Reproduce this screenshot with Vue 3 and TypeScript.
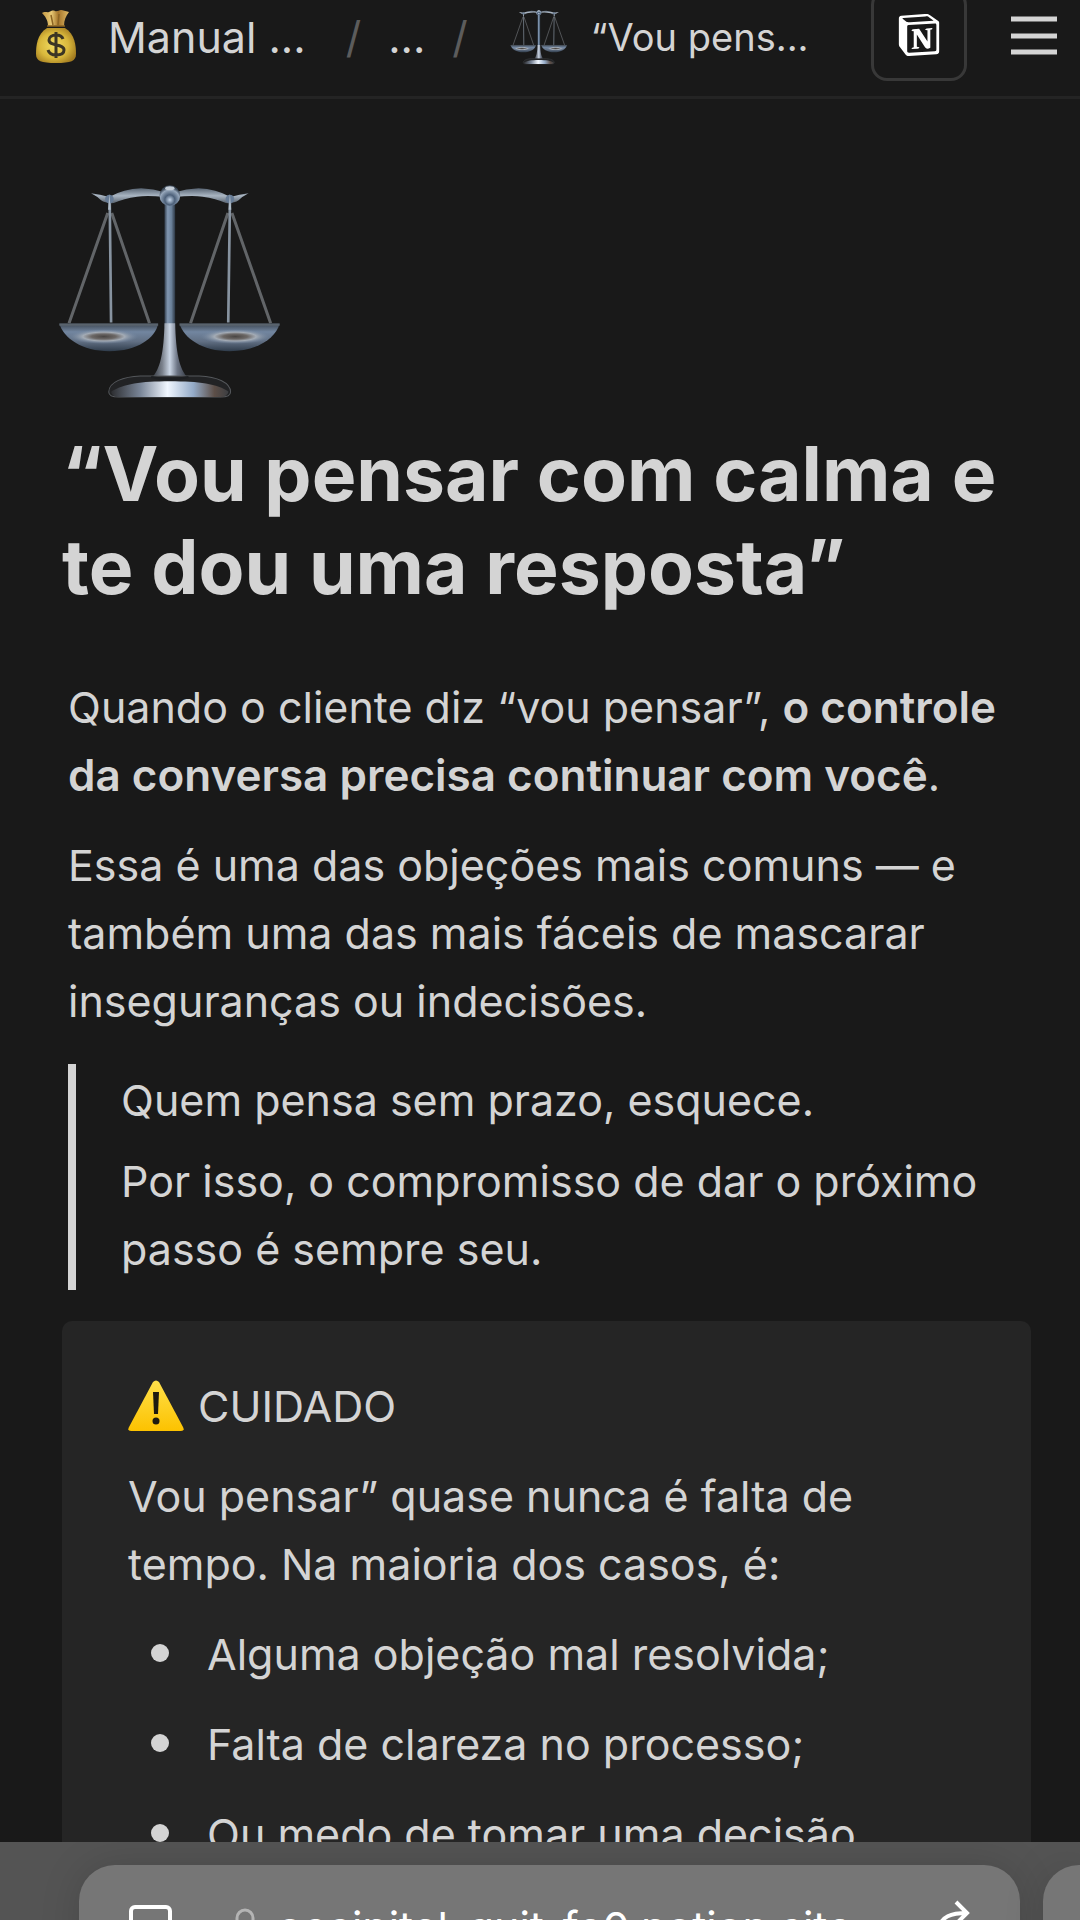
<script setup lang="ts">
import { ref } from 'vue'

const address = ref('occipital-quit-fe0.notion.site')

const reasons: string[] = [
  'Alguma objeção mal resolvida;',
  'Falta de clareza no processo;',
  'Ou medo de tomar uma decisão',
]
</script>

<template>
  <div class="screen">
    <header class="topbar">
      <nav class="crumbs" aria-label="Navegação">
        <a class="crumb root" href="#">
          <svg class="bag" viewBox="0 0 42 54" aria-hidden="true">
            <defs>
              <radialGradient id="bagBody" cx="0.45" cy="0.5" r="0.6">
                <stop offset="0" stop-color="#f2dc62" />
                <stop offset="0.6" stop-color="#d9b83c" />
                <stop offset="1" stop-color="#a37c20" />
              </radialGradient>
              <linearGradient id="bagNeck" x1="0" x2="1" y1="0" y2="0">
                <stop offset="0" stop-color="#c49a45" />
                <stop offset="0.35" stop-color="#e8c874" />
                <stop offset="0.6" stop-color="#a4742a" />
                <stop offset="1" stop-color="#dfba66" />
              </linearGradient>
            </defs>
            <path d="M12 18C2 24 1 36 1 44c0 7 5 9 20 9s20-2 20-9c0-8-1-20-11-26z" fill="url(#bagBody)" />
            <path d="M7 3c3-2 5 0 7-1s4-2 6-1 4-1 6-1 4 1 8 2c-3 4-5 8-5 14H13C13 10 10 6 7 3z" fill="url(#bagNeck)" />
            <path d="M12 16h18M16 5l2 10M24 4l-1 11" stroke="#8b6423" stroke-width="1.5" fill="none" />
            <path d="M28 29c-1-3-4-4-7-4-4 0-7 2-7 5 0 7 15 3 15 10 0 4-4 5-8 5s-7-2-8-5M21 22v26" stroke="#3b3524" stroke-width="3" fill="none" />
          </svg>
          <span>Manual ...</span>
        </a>
        <span class="slash" aria-hidden="true">/</span>
        <a class="crumb" href="#">...</a>
        <span class="slash" aria-hidden="true">/</span>
        <a class="crumb current" href="#">
          <svg class="mini-scale" viewBox="50 70 680 650" aria-hidden="true">
            <use href="#scale" x="50" y="70" width="680" height="650" />
          </svg>
          <span>“Vou pens...</span>
        </a>
      </nav>
      <div class="actions">
        <button class="logo-button" type="button" aria-label="Notion">
          <svg viewBox="0 0 24 24" aria-hidden="true">
            <path fill="#fff" d="M4.459 4.208c.746.606 1.026.56 2.428.466l13.215-.793c.28 0 .047-.28-.046-.326L17.86 1.968c-.42-.326-.981-.7-2.055-.607L3.01 2.295c-.466.046-.56.28-.374.466zm.793 3.08v13.904c0 .747.373 1.027 1.214.98l14.523-.84c.841-.046.935-.56.935-1.167V6.354c0-.606-.233-.933-.748-.887l-15.177.887c-.56.047-.747.327-.747.933zm14.337.745c.093.42 0 .84-.42.888l-.7.14v10.264c-.608.327-1.168.514-1.635.514-.748 0-.935-.234-1.495-.933l-4.577-7.186v6.952L12.21 19s0 .84-1.168.84l-3.222.186c-.093-.186 0-.653.327-.746l.84-.233V9.854L7.822 9.76c-.094-.42.14-1.026.793-1.073l3.456-.233 4.764 7.279v-6.44l-1.215-.139c-.093-.514.28-.887.747-.933zM1.936 1.035l13.31-.98c1.634-.14 2.055-.047 3.082.7l4.249 2.986c.7.513.934.653.934 1.213v16.378c0 1.026-.373 1.634-1.68 1.726l-15.458.934c-.98.047-1.448-.093-1.962-.747l-3.129-4.06c-.56-.747-.793-1.306-.793-1.96V2.667c0-.839.374-1.54 1.447-1.632z" />
          </svg>
        </button>
        <button class="menu-button" type="button" aria-label="Menu">
          <svg viewBox="0 0 46 40" aria-hidden="true">
            <path d="M0 3h46M0 20h46M0 36h46" stroke="#d4d4d4" stroke-width="5" />
          </svg>
        </button>
      </div>
    </header>

    <main class="page">
      <svg class="page-icon" viewBox="50 70 680 650" role="img" aria-label="Balança">
        <defs>
          <linearGradient id="post" x1="0" x2="1" y1="0" y2="0">
            <stop offset="0" stop-color="#34404f" />
            <stop offset="0.3" stop-color="#8196b0" />
            <stop offset="0.65" stop-color="#6a8099" />
            <stop offset="1" stop-color="#2c3744" />
          </linearGradient>
          <linearGradient id="foot" x1="0" x2="1" y1="0" y2="0">
            <stop offset="0" stop-color="#2b3038" />
            <stop offset="0.3" stop-color="#7b828d" />
            <stop offset="0.5" stop-color="#cbd6e5" />
            <stop offset="0.7" stop-color="#6c7484" />
            <stop offset="1" stop-color="#2b3038" />
          </linearGradient>
          <linearGradient id="base" x1="0" x2="1" y1="0" y2="0">
            <stop offset="0" stop-color="#2c2d30" />
            <stop offset="0.25" stop-color="#7a8698" />
            <stop offset="0.48" stop-color="#f1f7ff" />
            <stop offset="0.7" stop-color="#94abc8" />
            <stop offset="0.88" stop-color="#5c4e47" />
            <stop offset="1" stop-color="#3c3e42" />
          </linearGradient>
          <linearGradient id="pan" x1="0" x2="0" y1="0" y2="1">
            <stop offset="0" stop-color="#3c4550" />
            <stop offset="0.3" stop-color="#7286a0" />
            <stop offset="0.65" stop-color="#616f83" />
            <stop offset="1" stop-color="#2f3c4b" />
          </linearGradient>
          <radialGradient id="shine">
            <stop offset="0" stop-color="#4a4644" />
            <stop offset="0.35" stop-color="#6c6866" />
            <stop offset="0.6" stop-color="#a3abb5" />
            <stop offset="1" stop-color="#7286a0" stop-opacity="0" />
          </radialGradient>
          <radialGradient id="ball" cx="0.5" cy="0.7" r="0.6">
            <stop offset="0" stop-color="#c7d8ec" />
            <stop offset="0.4" stop-color="#4c6079" />
            <stop offset="0.8" stop-color="#97a8bc" />
            <stop offset="1" stop-color="#3b4857" />
          </radialGradient>
          <linearGradient id="arm" x1="0" x2="0" y1="0" y2="1">
            <stop offset="0" stop-color="#596573" />
            <stop offset="0.5" stop-color="#a9b5c2" />
            <stop offset="1" stop-color="#59636f" />
          </linearGradient>
          <symbol id="scale" viewBox="50 70 680 650" overflow="visible">
            <path d="M202 160L86 490M214 160L327 490M562 160L450 490M574 160L690 490" stroke="#626568" stroke-width="9" fill="none" />
            <path d="M208 130L212 488M568 130L563 488" stroke="#8793a0" stroke-width="8" fill="none" />
            <path d="M152 101Q180 104 206 112Q250 88 302 86Q340 88 372 98V112Q320 106 290 111Q250 116 220 130Q196 132 182 122Q170 110 152 101zM624 101Q596 104 570 112Q526 88 474 86Q436 88 404 98V112Q456 106 486 111Q526 116 556 130Q580 132 594 122Q606 110 624 101z" fill="url(#arm)" />
            <path d="M372 120H404V500H372z" fill="url(#post)" />
            <path d="M372 490H404C406 575 416 630 444 655H332C360 630 370 575 372 490z" fill="url(#foot)" />
            <circle cx="388" cy="108" r="31" fill="url(#ball)" />
            <ellipse cx="388" cy="86" rx="14" ry="6" fill="#c4cdd7" />
            <circle cx="207" cy="118" r="13" fill="#667b95" />
            <circle cx="568" cy="118" r="13" fill="#667b95" />
            <path d="M203 150L207 102L211 150zM564 150L568 102L572 150z" fill="#aebbc8" />
            <path d="M57 491H353C345 535 290 574 207 574S70 535 57 491z" fill="url(#pan)" />
            <path d="M417 491H717C705 535 650 574 567 574S430 535 417 491z" fill="url(#pan)" />
            <ellipse cx="190" cy="530" rx="104" ry="22" fill="url(#shine)" />
            <ellipse cx="584" cy="530" rx="104" ry="22" fill="url(#shine)" />
            <path d="M57 494H353M417 494H717" stroke="#59636d" stroke-width="7" />
            <path d="M205 696C205 665 250 650 300 648H476C530 650 570 668 570 696Q570 711 540 711H235Q205 711 205 696z" fill="#222325" stroke="#55585c" stroke-width="3" />
            <path d="M212 695C250 672 300 664 388 664S530 672 564 695Q560 710 540 711H235Q214 710 212 695z" fill="url(#base)" />
            <path d="M332 651Q388 664 444 651" stroke="#1d1f22" stroke-width="6" fill="none" />
          </symbol>
        </defs>
        <use href="#scale" x="50" y="70" width="680" height="650" />
      </svg>

      <h1>“Vou pensar com calma e te dou uma resposta”</h1>

      <article class="content">
        <p>Quando o cliente diz “vou pensar”, <strong>o controle da conversa precisa continuar com você</strong>.</p>
        <p>Essa é uma das objeções mais comuns — e também uma das mais fáceis de mascarar inseguranças ou indecisões.</p>
        <blockquote>
          <p>Quem pensa sem prazo, esquece.</p>
          <p>Por isso, o compromisso de dar o próximo passo é sempre seu.</p>
        </blockquote>
      </article>

      <aside class="callout">
        <p class="callout-title">
          <svg class="warning" viewBox="0 0 56 52" aria-hidden="true">
            <defs>
              <linearGradient id="warn" x1="0" x2="0" y1="0" y2="1">
                <stop offset="0" stop-color="#ffe04a" />
                <stop offset="1" stop-color="#fcc200" />
              </linearGradient>
            </defs>
            <path d="M25 2Q28-1 31 2L55 47Q57 51 53 51H3Q-1 51 1 47z" fill="url(#warn)" />
            <path d="M25 12H31L30 34H26z" fill="#1d1a10" />
            <circle cx="28" cy="41" r="3.5" fill="#1d1a10" />
          </svg>
          <span>CUIDADO</span>
        </p>
        <p>Vou pensar” quase nunca é falta de tempo. Na maioria dos casos, é:</p>
        <ul>
          <li v-for="reason in reasons" :key="reason">{{ reason }}</li>
        </ul>
      </aside>
    </main>

    <footer class="browser">
      <div class="address">
        <button type="button" class="reader" aria-label="Leitor">
          <svg viewBox="0 0 44 44" aria-hidden="true">
            <rect x="2" y="2" width="39" height="34" rx="4" fill="none" stroke="#fff" stroke-width="4" />
          </svg>
        </button>
        <svg class="lock" viewBox="0 0 24 40" aria-hidden="true">
          <path d="M4 20V11a8 8 0 0 1 16 0v9" fill="none" stroke="#b4b4b4" stroke-width="3" />
          <rect x="1" y="19" width="22" height="18" rx="4" fill="#b4b4b4" />
        </svg>
        <input v-model="address" type="text" aria-label="Endereço" />
        <button type="button" class="share" aria-label="Compartilhar">
          <svg viewBox="0 0 34 56" aria-hidden="true">
            <path d="M3 28C6 18 14 14 31 14M20 3L31 14L20 25" fill="none" stroke="#fff" stroke-width="4" />
          </svg>
        </button>
      </div>
      <div class="next-tab"></div>
    </footer>
  </div>
</template>

<style>
body {
  margin: 0;
  background: #191919;
}
</style>

<style scoped>
.screen {
  height: 100vh;
  display: flex;
  flex-direction: column;
  overflow: hidden;
  background: #191919;
  color: #d4d4d4;
  font-family: Inter, "Liberation Sans", sans-serif;
  font-size: 43px;
  line-height: 68px;
}
p, h1, ul, blockquote {
  margin: 0;
  padding: 0;
}
button {
  padding: 0;
  border: 0;
  background: none;
}
svg {
  display: block;
  flex: none;
}
.topbar {
  flex: none;
  height: 96px;
  border-bottom: 3px solid #242424;
  display: flex;
  justify-content: space-between;
  padding: 0 23px 0 35px;
}
.crumbs {
  display: flex;
  align-items: center;
  height: 73px;
}
.crumb {
  display: flex;
  align-items: center;
  color: inherit;
  text-decoration: none;
  white-space: nowrap;
}
.root {
  gap: 31px;
  margin-right: 13px;
}
.bag {
  width: 42px;
  height: 54px;
}
.slash {
  margin: 0 27px;
  color: #5c5c5c;
}
.current {
  gap: 23px;
  margin-left: 15px;
  font-size: 38px;
}
.mini-scale {
  width: 58px;
  height: 56px;
}
.actions {
  display: flex;
  align-items: flex-start;
  gap: 44px;
}
.logo-button {
  width: 96px;
  height: 92px;
  margin-top: -11px;
  border: 3px solid #383838;
  border-radius: 16px;
  display: flex;
  align-items: center;
  justify-content: center;
}
.logo-button svg {
  width: 42px;
  height: 42px;
}
.menu-button {
  padding-top: 16px;
}
.menu-button svg {
  width: 46px;
  height: 40px;
}
.page {
  flex: 1;
  min-height: 0;
  overflow: hidden;
  padding: 84px 49px 0 62px;
}
.page-icon {
  width: 227px;
  height: 217px;
  margin-left: -5px;
}
h1 {
  margin-top: 27px;
  font-size: 75px;
  line-height: 93px;
  font-weight: 700;
}
.content {
  margin-top: 60px;
  padding: 0 16px 0 6px;
  display: flex;
  flex-direction: column;
  gap: 22px;
}
strong {
  font-size: 44px;
  font-weight: 600;
}
blockquote {
  margin: 7px 0 0;
  border-left: 8px solid #d4d4d4;
  padding: 2px 0 7px 45px;
  display: flex;
  flex-direction: column;
  gap: 13px;
}
.callout {
  margin-top: 31px;
  padding: 51px 66px;
  border-radius: 10px;
  background: #252525;
  display: flex;
  flex-direction: column;
  gap: 22px;
}
.callout-title {
  display: flex;
  align-items: center;
  gap: 14px;
}
.warning {
  width: 56px;
  height: 52px;
}
ul {
  list-style: none;
  display: flex;
  flex-direction: column;
  gap: 22px;
}
li {
  display: flex;
  gap: 38px;
  padding-left: 23px;
}
li::before {
  content: "";
  flex: none;
  width: 18px;
  height: 18px;
  margin-top: 24px;
  border-radius: 50%;
  background: #d4d4d4;
}
.browser {
  flex: none;
  height: 78px;
  box-sizing: border-box;
  padding: 23px 0 0 79px;
  display: flex;
  gap: 23px;
  overflow: hidden;
  background: #545454;
}
.address,
.next-tab {
  height: 124px;
  background: #767676;
  box-shadow: 0 0 40px rgba(0, 0, 0, 0.14);
}
.address {
  flex: 1;
  min-width: 0;
  box-sizing: border-box;
  padding: 0 50px;
  border-radius: 36px;
  display: flex;
  align-items: center;
  color: #fff;
}
.next-tab {
  flex: none;
  width: 37px;
  border-radius: 36px 0 0 36px;
}
.reader svg {
  width: 44px;
  height: 44px;
}
.lock {
  width: 24px;
  height: 40px;
  margin-left: 60px;
}
input {
  flex: 1;
  min-width: 0;
  margin-left: 20px;
  padding: 0;
  border: 0;
  outline: 0;
  background: none;
  color: inherit;
  font-family: inherit;
  font-size: 43px;
  line-height: 68px;
}
.share svg {
  width: 34px;
  height: 56px;
}
</style>
